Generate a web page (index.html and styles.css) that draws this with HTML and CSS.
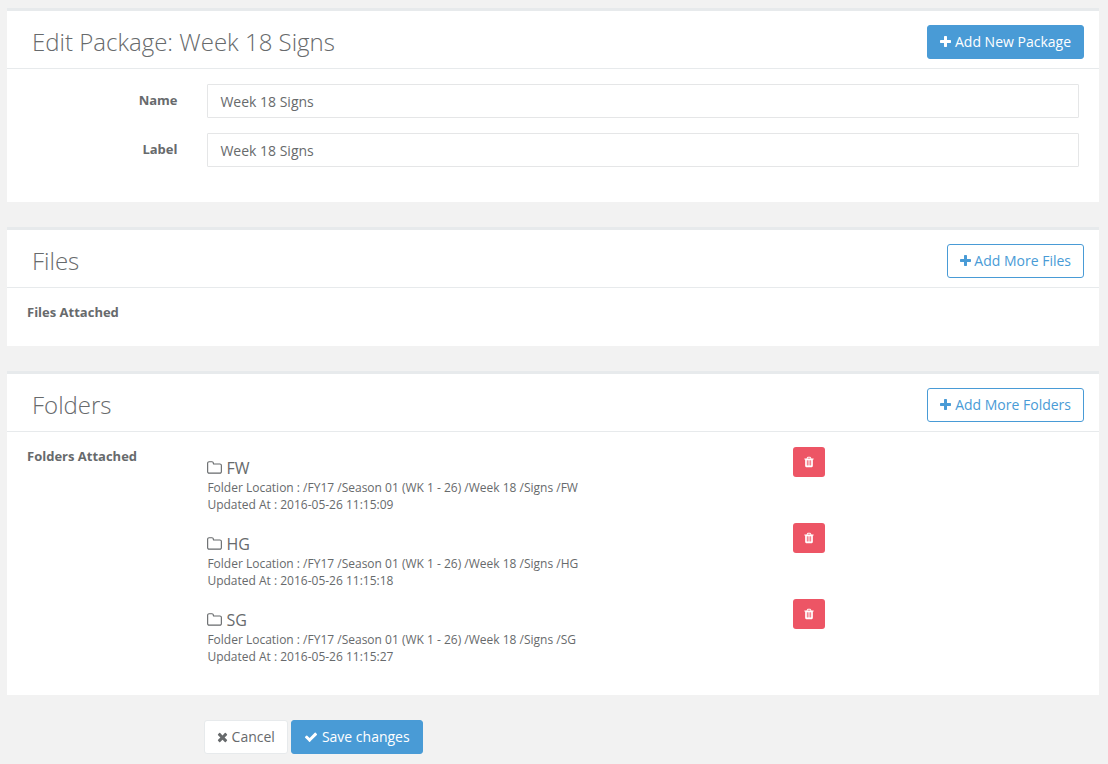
FILE: index.html
```html
<!DOCTYPE html>
<html lang="en">
<head>
<meta charset="utf-8">
<title>Edit Package</title>
<link rel="stylesheet" href="styles.css">
</head>
<body>
<svg class="sprite" aria-hidden="true">
  <symbol id="plus" viewBox="192 0 1408 1792"><path d="M1600 736v192q0 40-28 68t-68 28h-416v416q0 40-28 68t-68 28h-192q-40 0-68-28t-28-68v-416h-416q-40 0-68-28t-28-68v-192q0-40 28-68t68-28h416v-416q0-40 28-68t68-28h192q40 0 68 28t28 68v416h416q40 0 68 28t28 68z"/></symbol>
  <symbol id="times" viewBox="192 0 1408 1792"><path d="M1490 1322q0 40-28 68l-136 136q-28 28-68 28t-68-28l-294-294-294 294q-28 28-68 28t-68-28l-136-136q-28-28-28-68t28-68l294-294-294-294q-28-28-28-68t28-68l136-136q28-28 68-28t68 28l294 294 294-294q28-28 68-28t68 28l136 136q28 28 28 68t-28 68l-294 294 294 294q28 28 28 68z"/></symbol>
  <symbol id="check" viewBox="0 0 1792 1792"><path d="M1671 566q0 40-28 68l-724 724-136 136q-28 28-68 28t-68-28l-136-136-362-362q-28-28-28-68t28-68l136-136q28-28 68-28t68 28l294 295 656-657q28-28 68-28t68 28l136 136q28 28 28 68z"/></symbol>
  <symbol id="folder" viewBox="64 0 1664 1792"><path d="M1600 1312v-704q0-40-28-68t-68-28h-704q-40 0-68-28t-28-68v-64q0-40-28-68t-68-28h-320q-40 0-68 28t-28 68v960q0 40 28 68t68 28h1216q40 0 68-28t28-68zm128-704v704q0 92-66 158t-158 66h-1216q-92 0-158-66t-66-158v-960q0-92 66-158t158-66h320q92 0 158 66t66 158v32h672q92 0 158 66t66 158z"/></symbol>
  <symbol id="trash" viewBox="192 0 1408 1792"><path d="M704 1376v-704q0-14-9-23t-23-9h-64q-14 0-23 9t-9 23v704q0 14 9 23t23 9h64q14 0 23-9t9-23zm256 0v-704q0-14-9-23t-23-9h-64q-14 0-23 9t-9 23v704q0 14 9 23t23 9h64q14 0 23-9t9-23zm256 0v-704q0-14-9-23t-23-9h-64q-14 0-23 9t-9 23v704q0 14 9 23t23 9h64q14 0 23-9t9-23zm-544-992h448l-48-117q-7-9-17-11h-317q-10 2-17 11zm928 32v64q0 14-9 23t-23 9h-96v948q0 83-47 143.500t-113 60.500h-832q-66 0-113-58.500t-47-141.500v-952h-96q-14 0-23-9t-9-23v-64q0-14 9-23t23-9h309l70-167q15-37 54-63t79-26h320q40 0 79 26t54 63l70 167h309q14 0 23 9t9 23z"/></symbol>
</svg>

<main class="page">
  <section class="panel">
    <header class="panel-head">
      <h2 class="title">Edit Package: Week 18 Signs</h2>
      <button class="btn btn-primary"><svg class="icon icon-narrow"><use href="#plus"/></svg>Add New Package</button>
    </header>
    <form class="panel-body form">
      <div class="field"><label class="label label-right" for="name">Name</label><input class="input" id="name" type="text" value="Week 18 Signs"></div>
      <div class="field"><label class="label label-right" for="label">Label</label><input class="input" id="label" type="text" value="Week 18 Signs"></div>
    </form>
  </section>

  <section class="panel">
    <header class="panel-head">
      <h2 class="title">Files</h2>
      <button class="btn btn-outline"><svg class="icon icon-narrow"><use href="#plus"/></svg>Add More Files</button>
    </header>
    <div class="panel-body files"><span class="label">Files Attached</span></div>
  </section>

  <section class="panel">
    <header class="panel-head">
      <h2 class="title">Folders</h2>
      <button class="btn btn-outline"><svg class="icon icon-narrow"><use href="#plus"/></svg>Add More Folders</button>
    </header>
    <div class="panel-body folders">
      <span class="label">Folders Attached</span>
      <ul class="folder-list">
        <li class="folder">
          <div class="folder-info">
            <div class="folder-name"><svg class="icon icon-folder"><use href="#folder"/></svg>FW</div>
            <div class="meta">Folder Location : /FY17 /Season 01 (WK 1 - 26) /Week 18 /Signs /FW</div>
            <div class="meta">Updated At : 2016-05-26 11:15:09</div>
          </div>
          <button class="btn-delete" aria-label="Delete FW"><svg class="icon icon-trash"><use href="#trash"/></svg></button>
        </li>
        <li class="folder">
          <div class="folder-info">
            <div class="folder-name"><svg class="icon icon-folder"><use href="#folder"/></svg>HG</div>
            <div class="meta">Folder Location : /FY17 /Season 01 (WK 1 - 26) /Week 18 /Signs /HG</div>
            <div class="meta">Updated At : 2016-05-26 11:15:18</div>
          </div>
          <button class="btn-delete" aria-label="Delete HG"><svg class="icon icon-trash"><use href="#trash"/></svg></button>
        </li>
        <li class="folder">
          <div class="folder-info">
            <div class="folder-name"><svg class="icon icon-folder"><use href="#folder"/></svg>SG</div>
            <div class="meta">Folder Location : /FY17 /Season 01 (WK 1 - 26) /Week 18 /Signs /SG</div>
            <div class="meta">Updated At : 2016-05-26 11:15:27</div>
          </div>
          <button class="btn-delete" aria-label="Delete SG"><svg class="icon icon-trash"><use href="#trash"/></svg></button>
        </li>
      </ul>
    </div>
  </section>

  <footer class="actions">
    <button class="btn btn-white"><svg class="icon icon-narrow"><use href="#times"/></svg>Cancel</button>
    <button class="btn btn-primary"><svg class="icon"><use href="#check"/></svg>Save changes</button>
  </footer>
</main>
</body>
</html>
```
FILE: styles.css
```css
* { box-sizing: border-box; }
body {
  margin: 0;
  background: #f2f2f2;
  color: #676a6c;
  font-family: "Open Sans", "Liberation Sans", sans-serif;
  font-size: 13px;
}
.sprite { display: none; }
.page {
  display: flex;
  flex-direction: column;
  gap: 25px;
  padding: 8px 9px 0 7px;
}
.panel { background: #fff; border-top: 3px solid #e7eaec; }
.panel-head {
  display: flex;
  align-items: center;
  justify-content: space-between;
  height: 58px;
  padding: 4px 15px 0 25px;
  border-bottom: 1px solid #e7eaec;
}
.title { margin: 0; font-size: 24px; font-weight: 300; line-height: 26px; }
.panel-body { padding: 15px 20px 20px; }

.btn {
  display: flex;
  align-items: center;
  height: 34px;
  padding: 0 12px;
  gap: 4px;
  border: 1px solid transparent;
  border-radius: 3px;
  font-family: inherit;
  font-size: 14px;
  line-height: 20px;
  white-space: nowrap;
}
.btn-primary { background: #499bd6; border-color: #499bd6; color: #fff; }
.btn-outline { background: #fff; border-color: #499bd6; color: #499bd6; gap: 3.8px; }
.btn-white { background: #fff; border-color: #e7eaec; color: #676a6c; gap: 3.6px; }
.icon { flex: none; width: 14px; height: 14px; fill: currentColor; }
.icon-narrow { width: 11px; }

.form { display: flex; flex-direction: column; gap: 15px; padding-bottom: 35px; }
.field { display: grid; grid-template-columns: 150.5px 1fr; column-gap: 29.5px; }
.label { font-weight: 700; line-height: 18px; }
.label-right { padding-top: 7px; text-align: right; }
.input {
  width: 100%;
  height: 34px;
  padding: 6px 12px 6px 12.4px;
  border: 1px solid #e5e6e7;
  border-radius: 1px;
  background: #fff;
  color: inherit;
  font-family: inherit;
  font-size: 14px;
}
.files { height: 58px; }

.folders { display: grid; grid-template-columns: 180px 1fr; height: 263px; }
.folder-list { margin: 0; padding: 0; list-style: none; }
.folder { display: grid; grid-template-columns: 586px 32px; align-items: start; height: 76px; }
.folder-info { padding: 10px 0 0 0.4px; }
.folder-name { display: flex; align-items: center; gap: 4px; font-size: 16px; line-height: 22px; }
.icon-folder { width: 15px; height: 16px; }
.meta { font-size: 12px; line-height: 17px; }
.btn-delete {
  display: flex;
  align-items: center;
  justify-content: center;
  height: 30px;
  padding: 0;
  border: 0;
  border-radius: 3px;
  background: #ed5565;
  color: #fff;
}
.icon-trash { width: 10px; height: 12px; }

.actions { display: flex; gap: 3px; padding-left: 197px; }
```
